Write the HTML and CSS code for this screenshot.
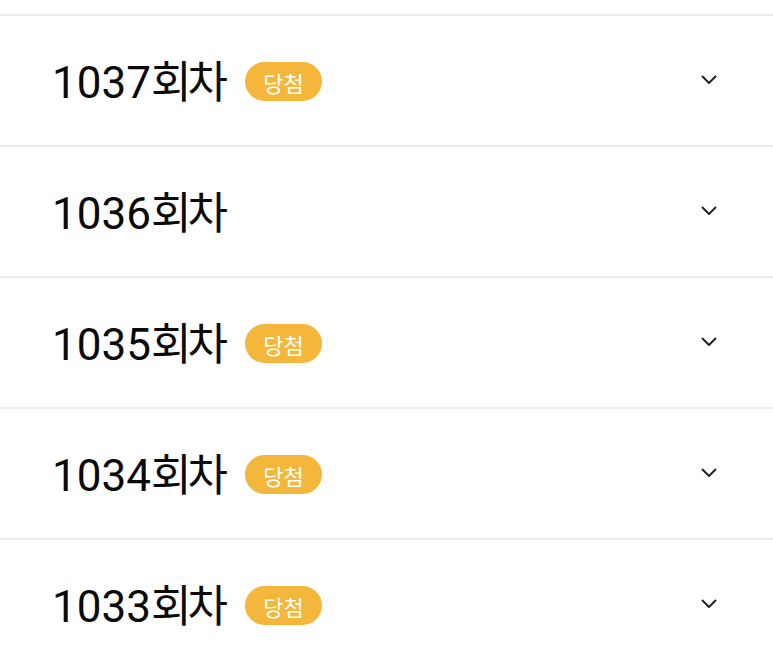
FILE: index.html
```html
<!DOCTYPE html>
<html lang="ko">
<head>
<meta charset="utf-8">
<link rel="stylesheet" href="styles.css">
</head>
<body>
<ul class="list">
  <li class="row"><span class="title">1037<span class="unit">회차</span></span><span class="badge">당첨</span><svg class="chev" viewBox="0 0 16 9"><path d="M1 1l7 7 7-7"/></svg></li>
  <li class="row"><span class="title">1036<span class="unit">회차</span></span><svg class="chev" viewBox="0 0 16 9"><path d="M1 1l7 7 7-7"/></svg></li>
  <li class="row"><span class="title">1035<span class="unit">회차</span></span><span class="badge">당첨</span><svg class="chev" viewBox="0 0 16 9"><path d="M1 1l7 7 7-7"/></svg></li>
  <li class="row"><span class="title">1034<span class="unit">회차</span></span><span class="badge">당첨</span><svg class="chev" viewBox="0 0 16 9"><path d="M1 1l7 7 7-7"/></svg></li>
  <li class="row"><span class="title">1033<span class="unit">회차</span></span><span class="badge">당첨</span><svg class="chev" viewBox="0 0 16 9"><path d="M1 1l7 7 7-7"/></svg></li>
</ul>
</body>
</html>
```
FILE: styles.css
```css
html, body {
  margin: 0;
  padding: 0;
  background: #fff;
}
body {
  font-family: Roboto, "Noto Sans CJK KR", sans-serif;
  overflow: hidden;
}
.list {
  list-style: none;
  margin: 14px 0 0;
  padding: 0;
}
.row {
  display: flex;
  align-items: center;
  height: 129px;
  border-top: 2px solid #ececec;
  padding: 0 52px 0 52px;
}
.title {
  font-size: 44px;
  color: #0a0a0a;
  line-height: 1;
  position: relative;
  top: 2px;
}
.unit {
  letter-spacing: -4px;
}
.badge {
  margin-left: 21px;
  width: 77px;
  height: 39px;
  border-radius: 20px;
  background: #f4b73c;
  color: #fff;
  font-family: "Noto Sans CJK KR", sans-serif;
  font-size: 22px;
  display: flex;
  align-items: center;
  justify-content: center;
  position: relative;
  top: 1px;
}
.chev {
  margin-left: auto;
  margin-right: 4px;
  width: 16px;
  height: 9px;
  fill: none;
  stroke: #222;
  stroke-width: 2;
  position: relative;
  top: -1px;
}
```
